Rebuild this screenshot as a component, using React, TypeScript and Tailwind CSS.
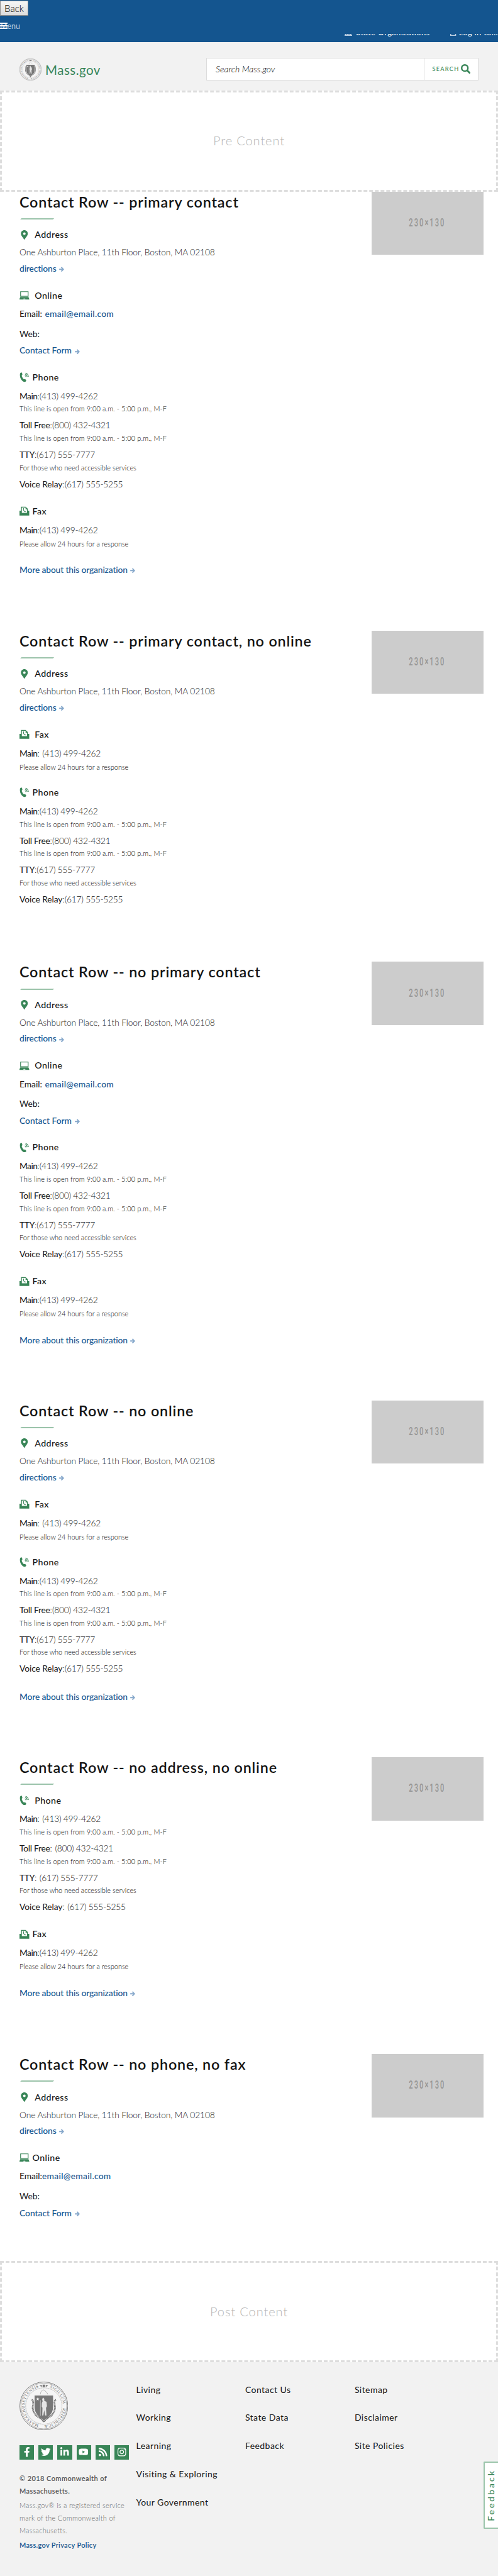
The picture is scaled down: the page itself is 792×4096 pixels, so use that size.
import type { ReactNode } from "react";
import { FaFacebookF, FaTwitter, FaLinkedinIn, FaYoutube, FaRss, FaInstagram } from "react-icons/fa";

/* ---------- icons ---------- */

function Arrow() {
  return (
    <svg viewBox="0 0 10 11" className="ml-[4.500px] inline-block h-[8.500px] w-[8px] fill-none stroke-[#86a8cb]" strokeWidth="2.4">
      <path d="M0 5.5H8.2M4.4 1L8.6 5.5L4.4 10" />
    </svg>
  );
}

function MarkerIcon() {
  return (
    <svg viewBox="0 0 20 20" className="h-[15.500px] w-[15.500px] fill-[#388557]">
      <path fillRule="evenodd" d="M10 0C6 0 3 3 3 7c0 4.500 4.500 8 7 13c2.500-5 7-8.500 7-13c0-4-3-7-7-7zm0 4.400a2.600 2.600 0 1 1 0 5.200a2.600 2.600 0 0 1 0-5.200z" />
    </svg>
  );
}

function LaptopIcon() {
  return (
    <svg viewBox="0 0 20 20" className="h-[15.500px] w-[15.500px] fill-[#388557]">
      <path fillRule="evenodd" d="M1.500 1.500h17v11h-17zM3 3v8h14V3zM1.600 13.300h16.800L20 17.200v1.300H0v-1.300zM8.300 16.600l-.5 1.100h4.400l-.5-1.100z" />
    </svg>
  );
}

function PhoneIcon() {
  return (
    <svg viewBox="0 0 20 20" className="h-[15.500px] w-[15.500px]">
      <path
        className="fill-[#388557]"
        d="M1.800 1.200C2.600.4 4 .1 4.600.5c.6.4 1.500 3.600 1.300 4.500c-.2.700-1.300 1-1.300 1.900c0 2 2.400 6.200 4.300 7.300c.8.400 1.700-.6 2.500-.4c.9.300 2.300 2.300 2.400 3.300c.1 1-1.700 2.700-3.300 2.700C5.800 19.800.9 12.300.9 6.200c0-2 .1-4.200.9-5z"
      />
      <g className="fill-none stroke-[#388557]" strokeWidth="1.300">
        <path d="M11 6.500c1.200.300 2 1.400 2.200 3M11.800 4c2.200.500 3.700 2.500 4 5.200M12.500 1.500c3.300.8 5.500 3.600 6 7.500" />
      </g>
    </svg>
  );
}

function FaxIcon() {
  return (
    <svg viewBox="0 0 20 20" className="h-[15.500px] w-[15.500px] fill-[#388557]">
      <path fillRule="evenodd" d="M0 9h3V1h9.500L17 5.200V9h3v10H0zM4.800 2.700V13.500h10.500V6.600h-2.800V2.700z" />
      <path d="M7.400 4.300l1.500-.3l.5 1.900l-.8.800c.3 1.200 1.100 2.300 2 3.200l1.100-.300l1.200 1.500l-1.200 1.100C8.900 11.500 7 8.200 7.400 4.300z" />
    </svg>
  );
}

function SearchIcon() {
  return (
    <svg viewBox="0 0 20 20" className="h-[15.500px] w-[15.500px] fill-none stroke-[#388557]">
      <circle cx="8" cy="8" r="6.400" strokeWidth="3.100" />
      <path d="M12.500 12.500L18.800 18.800" strokeWidth="3.600" />
    </svg>
  );
}

function Seal({ className, id }: { className: string; id: string }) {
  return (
    <svg viewBox="0 0 100 100" className={className}>
      <circle cx="50" cy="50" r="49.300" fill="#f5f5f5" stroke="#777" strokeWidth="1.200" />
      <circle cx="50" cy="50" r="47" fill="none" stroke="#777" strokeWidth=".7" />
      <circle cx="50" cy="50" r="37.300" fill="none" stroke="#8a8a8a" strokeWidth="1" strokeDasharray="1 .8" />
      <defs>
        <path id={id} d="M50 50m-39.500 0a39.500 39.500 0 1 1 79 0a39.500 39.500 0 1 1 -79 0" />
      </defs>
      <g transform="rotate(-75 50 50)">
        <text fontSize="8.200" fill="#6b6b6b" className="font-['Liberation_Serif']">
          <textPath href={`#${id}`} startOffset="0" textLength="103">MASSACHUSETTENSIS</textPath>
        </text>
      </g>
      <g transform="rotate(108 50 50)">
        <text fontSize="8.200" fill="#6b6b6b" className="font-['Liberation_Serif']">
          <textPath href={`#${id}`} startOffset="0" textLength="45">SIGILLUM</textPath>
        </text>
      </g>
      <g transform="rotate(186 50 50)">
        <text fontSize="8.200" fill="#6b6b6b" className="font-['Liberation_Serif']">
          <textPath href={`#${id}`} startOffset="0" textLength="57">REIPUBLICÆ</textPath>
        </text>
      </g>
      <path d="M41 8.500l5 -2v4zM59 8.500l-5 -2v4zM47.500 6h5v5h-5z" fill="#777" />
      <path d="M25 37q4 2 3 7l-1 10q2 13 12 19q7 3 11 10q4-7 11-10q10-6 12-19l-1-10q-1-5 3-7" fill="none" stroke="#777" strokeWidth="3.400" strokeDasharray="2.200 .8" />
      <path d="M43 26c0-5 3-9 7-9c3 2 7 5 8 9" fill="none" stroke="#aaa" strokeWidth="1.200" />
      <path d="M31 28.500h38v24c0 12-9 20-19 27c-10-7-19-15-19-27z" fill="#777" />
      <path d="M37.500 32l1 2.600h2.500l-2 1.600l.8 2.600l-2.300-1.500l-2.300 1.500l.8-2.600l-2-1.600h2.500z" fill="#f5f5f5" />
      <path d="M46 44l1.500-3.500l-1-5l2.500-3l2 3v4l4.500 2l1 9l-2 3l.8 16h-2.500l-2-11l-1.800 11h-2.300l.5-16l-1.500-2z" fill="#e6e6e6" />
      <path d="M43 38v32" stroke="#e6e6e6" strokeWidth=".8" />
    </svg>
  );
}

/* ---------- text rows ---------- */

type HeadingKind = "Address" | "Online" | "Phone" | "Fax";

function Heading({ kind, first, className }: { kind: HeadingKind; first?: boolean; className: string }) {
  return (
    <h3
      className={`flex h-[20px] items-center text-[14.200px] font-medium leading-[20px] tracking-[.45px] ${first ? "gap-[8.700px]" : "gap-[5px]"} ${className}`}
    >
      {kind === "Address" && <MarkerIcon />}
      {kind === "Online" && <LaptopIcon />}
      {kind === "Phone" && <PhoneIcon />}
      {kind === "Fax" && <FaxIcon />}
      <span>{kind}</span>
    </h3>
  );
}

function Body({ className = "", children }: { className?: string; children: ReactNode }) {
  return <p className={`h-[20px] whitespace-pre text-[13.800px] font-light leading-[20px] ${className}`}>{children}</p>;
}

function LinkLine({ className, children }: { className: string; children: ReactNode }) {
  return (
    <p className={`h-[20px] whitespace-pre text-[13.800px] font-medium leading-[20px] text-[#14558f] ${className}`}>
      <a>{children}</a>
      <Arrow />
    </p>
  );
}

function Small({ className, children }: { className: string; children: ReactNode }) {
  return <p className={`h-[14px] whitespace-pre text-[11px] font-light leading-[14px] text-black ${className}`}>{children}</p>;
}

function NumberLine({ label, number, spaced, className }: { label: string; number: string; spaced?: boolean; className: string }) {
  const tracking =
    label === "Main" ? "tracking-[-.5px]" : label === "Toll Free" ? "tracking-[-.25px]" : label === "TTY" ? "tracking-[-.3px]" : "tracking-[-.08px]";
  return (
    <Body className={className}>
      <span className={`font-normal ${tracking}`}>{label}</span>:
      <span className={`tracking-[-.24px] ${spaced ? "ml-[4.500px]" : ""}`}>{number}</span>
    </Body>
  );
}

/* ---------- contact groups ---------- */

function Address() {
  return (
    <div>
      <Heading kind="Address" first className="" />
      <Body className="mt-[8px] tracking-[-.11px]">One Ashburton Place, 11th Floor, Boston, MA 02108</Body>
      <LinkLine className="mt-[5.500px] tracking-[-.12px]">directions</LinkLine>
    </div>
  );
}

function Online({ first }: { first?: boolean }) {
  return (
    <div>
      <Heading kind="Online" first={first} className="mt-[22.800px]" />
      <Body className="mt-[9.600px]">
        <span className="font-normal">Email:</span>
        <a className={`font-medium tracking-[.3px] text-[#14558f] ${first ? "ml-[4.500px]" : ""}`}>email@email.com</a>
      </Body>
      <Body className="mt-[11.500px] font-normal">Web:</Body>
      <LinkLine className="mt-[6.600px]">Contact Form</LinkLine>
    </div>
  );
}

const hours = "This line is open from 9:00 a.m. - 5:00 p.m., M-F";

function Phone({ first, className }: { first?: boolean; className: string }) {
  return (
    <div className={className}>
      <Heading kind="Phone" first={first} className="" />
      <NumberLine label="Main" number="(413) 499-4262" spaced={first} className="mt-[9.900px]" />
      <Small className="mt-[3.600px] tracking-[.1px]">{hours}</Small>
      <NumberLine label="Toll Free" number="(800) 432-4321" spaced={first} className="mt-[9px]" />
      <Small className="mt-[3.600px] tracking-[.1px]">{hours}</Small>
      <NumberLine label="TTY" number="(617) 555-7777" spaced={first} className="mt-[9px]" />
      <Small className="mt-[3.600px]">For those who need accessible services</Small>
      <NumberLine label="Voice Relay" number="(617) 555-5255" spaced={first} className="mt-[9px]" />
    </div>
  );
}

function Fax({ first }: { first?: boolean }) {
  return (
    <div>
      <Heading kind="Fax" first={first} className="mt-[23.200px]" />
      <NumberLine label="Main" number="(413) 499-4262" spaced={first} className="mt-[9.900px]" />
      <Small className="mt-[5.200px]">Please allow 24 hours for a response</Small>
    </div>
  );
}

function More() {
  return <LinkLine className="mt-[24.300px] tracking-[-.12px]">More about this organization</LinkLine>;
}

function Row({ title, className, children }: { title: string; className: string; children: ReactNode }) {
  return (
    <section className={`flex items-start justify-between pl-[31px] pr-[23.200px] ${className}`}>
      <div className="pt-[1.900px]">
        <h2 className="h-[28px] whitespace-pre text-[23.300px] font-semibold leading-[28px] tracking-[.86px]">{title}</h2>
        <div className="ml-[2px] mt-[12.300px] h-[2.300px] w-[52px] -skew-x-45 bg-[#9bc3aa]" />
        <div className="mt-[14px]">{children}</div>
      </div>
      <div className="flex h-[100.600px] w-[178px] items-center justify-center bg-[#ccc]">
        <span className="scale-x-[.6] font-['Roboto'] text-[18.500px] font-medium tracking-[3.400px] text-[#969696]">230×130</span>
      </div>
    </section>
  );
}

function Placeholder({ children }: { children: ReactNode }) {
  return (
    <div className="flex h-[160.950px] items-center justify-center border-[3px] border-dashed border-[#ddd] bg-white pb-[2px] text-[20px] font-light tracking-[.9px] text-[#b5b5b5]">
      {children}
    </div>
  );
}

/* ---------- header and footer ---------- */

function Header() {
  return (
    <header>
      <div className="flex h-[66.550px] justify-between overflow-hidden bg-[#14558f]">
        <div className="pt-[1px]">
          <button className="block h-[24px] w-[45px] border border-[#8f8f8f] bg-linear-to-b from-[#f6f6f6] to-[#dcdcdc] text-[15px] font-light leading-[21px] text-black">
            Back
          </button>
          <div className="relative mt-[9px] h-[16px] text-[12.500px] leading-[16px] text-[#b5c9de]">
            Menu
            <div className="absolute left-0 top-[2px] flex w-[12px] flex-col gap-[2px]">
              <i className="h-[2px] bg-white" />
              <i className="h-[2px] bg-white" />
              <i className="h-[2px] bg-white" />
            </div>
          </div>
        </div>
        <div className="mt-[54px] h-[6px] w-[245px] overflow-hidden">
          <div className="-mt-[12px] flex h-[18px] items-center whitespace-nowrap text-[13px] font-normal leading-[18px] tracking-[.3px] text-white">
            <svg viewBox="0 0 16 16" className="ml-[1px] h-[12.400px] w-[12.400px] shrink-0 fill-[#b9cce0]">
              <path d="M0 5l8-5l8 5zM1 6h2v7H1zM4.500 6h2v7h-2zM8 6h2v7H8zM11.500 6h2v7h-2zM0 13h16v3H0z" />
            </svg>
            <span className="ml-[6px]">State Organizations</span>
            <svg viewBox="0 0 12 16" className="ml-[33px] h-[12.400px] w-[9.300px] shrink-0 fill-none stroke-[#b9cce0]" strokeWidth="2">
              <path d="M1 1h10v14H1z" />
            </svg>
            <span className="ml-[4px]">Log in to...</span>
          </div>
        </div>
      </div>
      <div className="flex h-[77.400px] items-start justify-between bg-[#f2f2f2] px-[31px] pt-[25.500px]">
        <div className="flex items-start gap-[6px] pt-[1px]">
          <Seal id="header-ring" className="h-[35px] w-[35px]" />
          <span className="pt-[3.600px] text-[20.500px] font-normal leading-[28px] tracking-[.5px] text-[#388557]">Mass.gov</span>
        </div>
        <div className="flex h-[35.600px] w-[433px] border-[1.500px] border-[#dcdcdc] bg-white">
          <div className="flex flex-1 items-center pl-[14px] text-[14px] font-light italic text-black">Search Mass.gov</div>
          <div className="flex w-[86px] items-center justify-center gap-[2.500px] border-l-[1.500px] border-[#dcdcdc] pl-[1px] text-[9.200px] font-medium tracking-[1.250px] text-[#388557]">
            SEARCH
            <SearchIcon />
          </div>
        </div>
      </div>
    </header>
  );
}

function LinkColumn({ className, links }: { className: string; links: string[] }) {
  return (
    <ul className={`whitespace-nowrap pt-[2.700px] text-[14px] font-normal tracking-[.45px] ${className}`}>
      {links.map((link) => (
        <li key={link} className="h-[44.720px] leading-[20px]">
          {link}
        </li>
      ))}
    </ul>
  );
}

const socialIcons = [FaFacebookF, FaTwitter, FaLinkedinIn, FaYoutube, FaRss, FaInstagram];

function Footer() {
  return (
    <footer className="relative flex h-[342px] bg-[#f2f2f2] pl-[31px] pt-[31px]">
      <div className="w-[185.500px] text-[11px] leading-[20.100px]">
        <Seal id="footer-ring" className="h-[77.400px] w-[77.400px]" />
        <div className="mt-[23.200px] flex gap-[7px]">
          {socialIcons.map((Icon, i) => (
            <span key={i} className="flex h-[23.200px] w-[23.200px] shrink-0 items-center justify-center bg-[#388557] text-white">
              <Icon className="h-[15.500px] w-[15.500px]" />
            </span>
          ))}
        </div>
        <p className="mt-[20px] w-[170px] font-semibold tracking-[.42px] text-[#555]">© 2018 Commonwealth of Massachusetts.</p>
        <p className="mt-[3.100px] w-[178px] font-light tracking-[.28px] text-[#666]">
          Mass.gov® is a registered service mark of the Commonwealth of Massachusetts.
        </p>
        <p className="mt-[3.100px] font-semibold tracking-[.32px] text-[#14558f]">Mass.gov Privacy Policy</p>
      </div>
      <LinkColumn className="w-[173.400px]" links={["Living", "Working", "Learning", "Visiting & Exploring", "Your Government"]} />
      <LinkColumn className="w-[174px]" links={["Contact Us", "State Data", "Feedback"]} />
      <LinkColumn className="" links={["Sitemap", "Disclaimer", "Site Policies"]} />
      <div className="absolute right-0 top-[158.500px] flex h-[106.500px] w-[23.500px] items-center justify-center rounded-l-[2px] border-[2.500px] border-r-0 border-[#9bc5ab] bg-white">
        <span className="rotate-180 text-[14px] font-medium leading-[14px] tracking-[3px] text-[#388557] [writing-mode:vertical-rl]">Feedback</span>
      </div>
    </footer>
  );
}

export default function App() {
  return (
    <div className="h-[4096px] w-[792px] overflow-hidden bg-white font-['Lato',sans-serif] text-[#141414]">
      <Header />
      <Placeholder>Pre Content</Placeholder>

      <Row title="Contact Row -- primary contact" className="h-[698px]">
        <Address />
        <Online first />
        <Phone className="mt-[22.500px]" />
        <Fax />
        <More />
      </Row>
      <Row title="Contact Row -- primary contact, no online" className="h-[526.600px]">
        <Address />
        <Fax first />
        <Phone className="mt-[22.900px]" />
      </Row>
      <Row title="Contact Row -- no primary contact" className="h-[697.200px]">
        <Address />
        <Online first />
        <Phone className="mt-[22.500px]" />
        <Fax />
        <More />
      </Row>
      <Row title="Contact Row -- no online" className="h-[567.400px]">
        <Address />
        <Fax first />
        <Phone className="mt-[22.900px]" />
        <More />
      </Row>
      <Row title="Contact Row -- no address, no online" className="h-[472px]">
        <Phone first className="" />
        <Fax />
        <More />
      </Row>
      <Row title="Contact Row -- no phone, no fax" className="h-[329px]">
        <Address />
        <Online />
      </Row>

      <Placeholder>Post Content</Placeholder>
      <Footer />
    </div>
  );
}
